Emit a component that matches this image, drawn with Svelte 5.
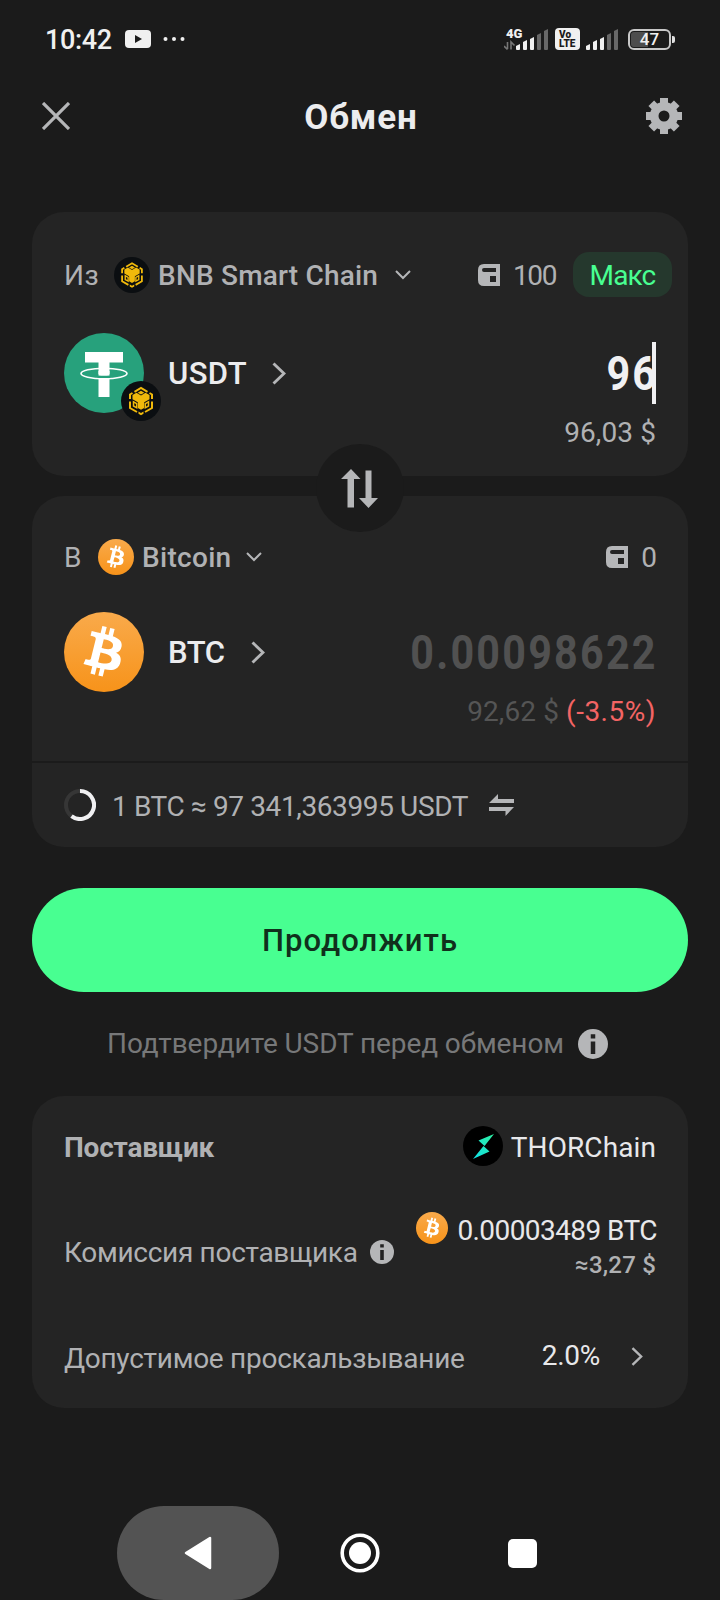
<script>
    const signalBars = [6, 10, 13, 17, 21];

    const from = {
        chain: "BNB Smart Chain",
        token: "USDT",
        balance: "100",
        amount: "96",
        fiat: "96,03 $",
    };
    const to = {
        chain: "Bitcoin",
        token: "BTC",
        balance: "0",
        amount: "0.00098622",
        fiat: "92,62 $",
        change: "(-3.5%)",
    };
</script>

{#snippet bars()}
    {#each signalBars as h, i}
        <path
            d="M{i * 7} {23 - h + 2}l4-2v{h - 1}q0 1-1 1h-2q-1 0-1-1z"
            fill={i < 3 ? "#f0f0f0" : "#686868"}
        />
    {/each}
{/snippet}

{#snippet bnb(size)}
    <svg width={size} height={size} viewBox="0 0 40 40">
        <circle cx="20" cy="20" r="20" fill="#0b0e11" />
        <g fill="none" stroke="#f0b90b" stroke-width="2">
            <path d="M13.500 10.800 20 7l6.500 3.800M11.500 12 9 13.500V18M28.500 12l2.500 1.500V18M9 20.500V27l7 4M31 20.500V27l-7 4" />
            <path d="M12.500 20.800v4.200l3.200 1.800v-4.200zM27.500 20.800v4.200l-3.200 1.800v-4.200z" stroke-width="1.500" />
        </g>
        <path
            fill="#f0b90b"
            d="M20 9.800l3.300 1.900-3.300 1.900-3.300-1.900zM11.500 14l4-2.200 4.500 2.700 4.500-2.700 4 2.200v4.200l-5.300 3.100v5.700L20 28.800 16.800 27v-5.700l-5.300-3.100zM17.500 30.500l2.500 1.400 2.500-1.400v2.300L20 34.200l-2.500-1.400z"
        />
    </svg>
{/snippet}

{#snippet btc(size)}
    <svg width={size} height={size} viewBox="0 0 64 64">
        <defs>
            <linearGradient id="btc-{size}" x1="0" y1="0" x2="0" y2="1">
                <stop offset="0" stop-color="#f9aa4b" />
                <stop offset="1" stop-color="#f7931a" />
            </linearGradient>
        </defs>
        <circle cx="32" cy="32" r="32" fill="url(#btc-{size})" />
        <path
            fill="#fff"
            d="m46.103,27.444c0.637-4.258-2.605-6.547-7.038-8.074l1.438-5.768-3.511-0.875-1.400,5.616c-0.923-0.230-1.871-0.447-2.813-0.662l1.410-5.653-3.509-0.875-1.439,5.766c-0.764-0.174-1.514-0.346-2.242-0.527l0.004-0.018-4.842-1.209-0.934,3.750s2.605,0.597,2.550,0.634c1.422,0.355,1.679,1.296,1.636,2.042l-1.638,6.571c0.098,0.025,0.225,0.061,0.365,0.117-0.117-0.029-0.242-0.061-0.371-0.092l-2.296,9.205c-0.174,0.432-0.615,1.080-1.609,0.834,0.035,0.051-2.552-0.637-2.552-0.637l-1.743,4.019,4.569,1.139c0.850,0.213,1.683,0.436,2.503,0.646l-1.453,5.834,3.507,0.875,1.439-5.772c0.958,0.260,1.888,0.500,2.798,0.726l-1.434,5.745,3.511,0.875,1.453-5.823c5.987,1.133,10.489,0.676,12.384-4.739,1.527-4.360-0.076-6.875-3.226-8.515,2.294-0.529,4.022-2.038,4.483-5.155zm-8.022,11.249c-1.085,4.360-8.426,2.003-10.806,1.412l1.928-7.729c2.380,0.594,10.012,1.770,8.878,6.317zm1.086-11.312c-0.990,3.966-7.100,1.951-9.082,1.457l1.748-7.010c1.982,0.494,8.365,1.416,7.334,5.553z"
        />
    </svg>
{/snippet}

{#snippet wallet()}
    <svg class="wallet" width="22" height="22" viewBox="0 0 22 22">
        <path
            fill="#b5b6b8"
            fill-rule="evenodd"
            d="M6 0h16v22H6q-6 0-6-6V6q0-6 6-6zM6 4a2 2 0 0 0 0 4h12V4zM12 12v6h6v-6z"
        />
    </svg>
{/snippet}

{#snippet down()}
    <svg class="down" width="16" height="10" viewBox="0 0 16 10">
        <path d="M1 1l7 7 7-7" fill="none" stroke="#b5b6b8" stroke-width="2" />
    </svg>
{/snippet}

{#snippet right(w, h)}
    <svg width={w} height={h} viewBox="0 0 14 23">
        <path d="M1.500 1.500l10.500 10-10.500 10" fill="none" stroke="#b5b6b8" stroke-width="2.900" />
    </svg>
{/snippet}

{#snippet info(size)}
    <svg width={size} height={size} viewBox="0 0 24 24">
        <circle cx="12" cy="12" r="12" fill="#b5b6b8" />
        <path d="M10.200 4.200h3.600v3.300h-3.600zM10.200 10h3.600v10h-3.600z" fill="#222" />
    </svg>
{/snippet}

<div class="screen">
    <div class="status">
        <span class="time">10:42</span>
        <svg width="26" height="18" viewBox="0 0 26 18">
            <rect width="26" height="18" rx="4" fill="#f0f0f0" />
            <path d="M10 5v8l7-4z" fill="#1b1b1b" />
        </svg>
        <svg class="dots" width="22" height="6" viewBox="0 0 22 6" fill="#f0f0f0">
            <circle cx="2.500" cy="3" r="2" />
            <circle cx="11" cy="3" r="2" />
            <circle cx="19.500" cy="3" r="2" />
        </svg>
        <svg class="mobile" width="46" height="24" viewBox="0 0 46 24">
            <text x="2" y="10.500" class="net">4G</text>
            <path d="M3.500 15v7M0 19l3.500 3.500M7 22.500V15l3.500 3.500" stroke="#777" stroke-width="1.600" fill="none" />
            <g transform="translate(12 0)">{@render bars()}</g>
        </svg>
        <svg class="volte" width="25" height="22" viewBox="0 0 25 22">
            <rect width="25" height="22" rx="4" fill="#f0f0f0" />
            <text x="4" y="10">Vo</text>
            <text x="4" y="19">LTE</text>
        </svg>
        <svg class="second" width="33" height="24" viewBox="0 0 33 24">{@render bars()}</svg>
        <div class="battery">
            <span>47</span>
        </div>
        <i class="nub"></i>
    </div>

    <header>
        <svg width="28" height="28" viewBox="0 0 28 28">
            <path d="M1 1l26 26M27 1L1 27" stroke="#b5b6b8" stroke-width="3.200" />
        </svg>
        <h1>Обмен</h1>
        <svg width="36" height="36" viewBox="-18 -18 36 36">
            <circle r="9.800" fill="none" stroke="#b5b6b8" stroke-width="8.600" />
            {#each [0, 45, 90, 135, 180, 225, 270, 315] as angle}
                <rect x="-4" y="-18" width="8" height="6" fill="#b5b6b8" transform="rotate({angle})" />
            {/each}
        </svg>
    </header>

    <section class="card from">
        <div class="chain-row">
            <span class="dir iz">Из</span>
            {@render bnb(36)}
            <span class="chain bnb-name">{from.chain}</span>
            {@render down()}
            <div class="balance">
                {@render wallet()}
                <span class="hundred">{from.balance}</span>
                <button class="max">Макс</button>
            </div>
        </div>
        <div class="token-row">
            <div class="token">
                <div class="logo">
                    <svg width="80" height="80" viewBox="0 0 80 80">
                        <circle cx="40" cy="40" r="40" fill="#27a17c" />
                        <path d="M21 19h38v10.500H45.500V41h-11V29.500H21zM34.500 45.500h11V64h-11z" fill="#fff" />
                        <path d="M34.500 38h11v4.500q-5.500.6-11 0z" fill="#fff" />
                        <ellipse cx="40" cy="40.500" rx="23" ry="5.200" fill="none" stroke="#fff" stroke-width="1.600" />
                        <path d="M33.500 44.200q6.500.5 13 0" stroke="#27a17c" stroke-width="1.200" fill="none" />
                    </svg>
                    <div class="badge">{@render bnb(40)}</div>
                </div>
                <span class="symbol usdt">{from.token}</span>
                {@render right(14, 23)}
            </div>
            <div class="value">
                <div class="amount entered"><span>{from.amount}</span><i class="cursor"></i></div>
                <div class="fiat">{from.fiat}</div>
            </div>
        </div>
        <div class="swap">
            <svg width="38" height="39" viewBox="0 0 38 39" fill="#b5b6b8">
                <path d="M10 0l9.500 10H13v28.500H6.500V10H0z" />
                <path d="M27.500 39L18 29h6.500V1.500h6V29H37z" />
            </svg>
        </div>
    </section>

    <section class="card to">
        <div class="chain-row">
            <span class="dir">В</span>
            {@render btc(36)}
            <span class="chain btc-name">{to.chain}</span>
            {@render down()}
            <div class="balance">
                {@render wallet()}
                <span class="zero">{to.balance}</span>
            </div>
        </div>
        <div class="token-row">
            <div class="token">
                {@render btc(80)}
                <span class="symbol btc">{to.token}</span>
                {@render right(14, 23)}
            </div>
            <div class="value">
                <div class="amount estimate"><span>{to.amount}</span></div>
                <div class="fiat"><span class="dim">{to.fiat}</span> <span class="loss">{to.change}</span></div>
            </div>
        </div>
        <div class="rate">
            <svg width="32" height="32" viewBox="0 0 32 32" fill="none" stroke-width="4">
                <circle cx="16" cy="16" r="14" stroke="#363636" />
                <path d="M16 2a14 14 0 1 1-8.500 25.100" stroke="#f0f0f2" />
            </svg>
            <span>1 BTC ≈ 97 341,363995 USDT</span>
            <svg width="25" height="22" viewBox="0 0 25 22" fill="#b5b6b8">
                <path d="M0 9l9-9v5h16v4zM25 13l-8.500 9v-5H0v-4z" />
            </svg>
        </div>
    </section>

    <button class="continue">Продолжить</button>

    <div class="hint">
        <span>Подтвердите USDT перед обменом</span>
        {@render info(30)}
    </div>

    <section class="card details">
        <div class="detail provider">
            <b>Поставщик</b>
            <div class="detail-value">
                <svg width="40" height="40" viewBox="0 0 40 40">
                    <defs>
                        <linearGradient id="thor" x1="0" y1="1" x2="1" y2="0">
                            <stop offset="0" stop-color="#0fe0e8" />
                            <stop offset="1" stop-color="#2ff0a0" />
                        </linearGradient>
                    </defs>
                    <circle cx="20" cy="20" r="20" fill="#000" />
                    <path d="M31 8L15.500 14.500l6 5.500zM20.500 20l6 5.500L10 33z" fill="url(#thor)" />
                </svg>
                <span class="thor">THORChain</span>
            </div>
        </div>
        <div class="detail fee">
            <span class="label">Комиссия поставщика</span>
            {@render info(24)}
            <div class="detail-value">
                {@render btc(32)}
                <div class="fee-value">
                    <span class="fee-amount">0.00003489 BTC</span>
                    <small>≈3,27 $</small>
                </div>
            </div>
        </div>
        <div class="detail slippage">
            <span class="label">Допустимое проскальзывание</span>
            <div class="detail-value">
                <span class="percent">2.0%</span>
                {@render right(12, 19)}
            </div>
        </div>
    </section>

    <nav>
        <div class="nav-item back">
            <svg width="28" height="34" viewBox="0 0 28 34">
                <path d="M26 2v30L2 17z" fill="#fff" stroke="#fff" stroke-width="2.500" stroke-linejoin="round" />
            </svg>
        </div>
        <div class="nav-item">
            <svg width="40" height="40" viewBox="0 0 40 40">
                <circle cx="20" cy="20" r="17.800" fill="none" stroke="#fff" stroke-width="3.600" />
                <circle cx="20" cy="20" r="11" fill="#fff" />
            </svg>
        </div>
        <div class="nav-item"><i class="recent"></i></div>
    </nav>
</div>

<style>
    :global(body) {
        background: #1b1b1b;
    }
    .screen {
        display: flex;
        flex-direction: column;
        width: 720px;
        height: 1600px;
        overflow: hidden;
        background: #1b1b1b;
        color: #b0b1b3;
        font-family: "Roboto", sans-serif;
        font-size: 28px;
        line-height: 40px;
        white-space: nowrap;
    }
    svg {
        display: block;
        flex: none;
    }
    button {
        border: none;
        font: inherit;
        cursor: pointer;
    }
    .status {
        display: flex;
        align-items: center;
        height: 78px;
        padding: 0 45px;
    }
    .time {
        width: 80px;
        padding-top: 1px;
        font-size: 27px;
        font-weight: 500;
        letter-spacing: -0.35px;
        color: #f0f0f0;
    }
    .dots {
        margin-left: 12px;
    }
    .mobile {
        margin-left: auto;
    }
    .net {
        font-size: 13px;
        font-weight: 900;
        fill: #f0f0f0;
    }
    .volte {
        margin-left: 5px;
        font-size: 10px;
        font-weight: 900;
        fill: #1b1b1b;
    }
    .second {
        margin-left: 6px;
    }
    .battery {
        display: flex;
        justify-content: center;
        align-items: center;
        box-sizing: border-box;
        width: 43px;
        height: 21px;
        margin-left: 9px;
        border: 2px solid #c8c8c8;
        border-radius: 6px;
        background: linear-gradient(90deg, #4d4d4d 47%, transparent 47%) content-box;
        padding: 1px;
        color: #f0f0f0;
        font-size: 17px;
        font-weight: 500;
    }
    .nub {
        width: 3px;
        height: 7px;
        margin: 0 0 0 1px;
        border-radius: 0 2px 2px 0;
        background: #e0e0e0;
    }
    header {
        display: flex;
        align-items: center;
        justify-content: space-between;
        height: 76px;
        padding: 0 38px 0 42px;
        margin-bottom: 58px;
    }
    h1 {
        margin: 4px 0 0 6px;
        font-size: 35px;
        letter-spacing: 0.9px;
        color: #ececee;
    }
    .card {
        position: relative;
        box-sizing: border-box;
        margin: 0 32px;
        border-radius: 32px;
        background: #242424;
    }
    .from {
        height: 264px;
        padding: 40px 16px 0 32px;
    }
    .to {
        height: 351px;
        margin-top: 20px;
        padding-top: 40px;
    }
    .to .chain-row,
    .to .token-row {
        margin-left: 32px;
    }
    .chain-row {
        display: flex;
        align-items: center;
        height: 45px;
    }
    .chain-row span,
    .symbol {
        padding-top: 2px;
    }
    .to .chain-row {
        height: 42px;
        padding-right: 32px;
    }
    .dir {
        width: 34px;
    }
    .iz {
        width: 50px;
        letter-spacing: 0.5px;
    }
    .chain {
        margin: 0 17px 0 8px;
        font-weight: 500;
    }
    .bnb-name {
        letter-spacing: 0.2px;
    }
    .btc-name {
        margin: 0 15px 0 8px;
        letter-spacing: 0.3px;
    }
    .balance {
        display: flex;
        align-items: center;
        margin-left: auto;
    }
    .wallet {
        margin-right: 13px;
    }
    .hundred {
        margin-right: 17px;
        letter-spacing: -1.4px;
    }
    .zero {
        margin-right: -1px;
    }
    .max {
        width: 99px;
        height: 45px;
        padding: 2px 0 0;
        border-radius: 16px;
        background: #25382d;
        color: #48ff91;
        letter-spacing: -0.85px;
    }
    .token-row {
        display: flex;
        justify-content: space-between;
        margin-top: 36px;
        padding-right: 16px;
    }
    .to .token-row {
        margin-top: 34px;
        padding-right: 32px;
    }
    .token {
        display: flex;
        align-items: center;
        height: 80px;
    }
    .logo {
        position: relative;
    }
    .badge {
        position: absolute;
        left: 57px;
        top: 48px;
    }
    .symbol {
        margin: 0 25px 0 24px;
        font-size: 31px;
        font-weight: 500;
        color: #ececee;
    }
    .usdt {
        letter-spacing: 0.4px;
    }
    .btc {
        margin-right: 27px;
        letter-spacing: -0.5px;
    }
    .value {
        padding-top: 9px;
        text-align: right;
    }
    .amount {
        position: relative;
        height: 62px;
        margin-bottom: 9px;
        font-size: 48px;
        font-weight: 700;
        line-height: 64px;
    }
    /* narrow, widely spaced digits */
    .amount span {
        display: inline-block;
        margin-right: -2px;
        letter-spacing: 2.6px;
        transform: scaleX(0.86);
        transform-origin: right;
    }
    .entered {
        color: #f0f0f2;
    }
    .estimate {
        color: #515151;
    }
    .cursor {
        position: absolute;
        right: 0;
        top: 0;
        width: 4px;
        height: 62px;
        background: #f0f0f2;
    }
    .fiat {
        letter-spacing: 0.1px;
    }
    .dim {
        color: #555;
    }
    .loss {
        letter-spacing: 0.5px;
        color: #f36464;
    }
    .swap {
        position: absolute;
        left: 284px;
        top: 232px;
        z-index: 1;
        display: flex;
        align-items: center;
        justify-content: center;
        width: 88px;
        height: 88px;
        border-radius: 50%;
        background: #1b1b1b;
    }
    .rate {
        display: flex;
        align-items: center;
        height: 84px;
        margin-top: 29px;
        padding-left: 32px;
        border-top: 2px solid #1b1b1b;
    }
    .rate span {
        margin: 3px 21px 0 16px;
        letter-spacing: -0.38px;
    }
    .continue {
        flex: none;
        height: 104px;
        margin: 41px 32px 0;
        padding-top: 3px;
        border-radius: 52px;
        background: #48ff91;
        color: #10301c;
        font-size: 31px;
        font-weight: 500;
        letter-spacing: 1.05px;
    }
    .hint {
        display: flex;
        align-items: center;
        height: 104px;
        padding-left: 107px;
        color: #777879;
    }
    .hint span {
        margin-right: 14px;
        letter-spacing: -0.09px;
    }
    .details {
        height: 312px;
        padding: 0 32px;
    }
    .detail {
        display: flex;
        align-items: center;
        height: 100px;
    }
    .detail-value {
        display: flex;
        align-items: center;
        margin-left: auto;
        color: #e8e8ea;
    }
    .provider b {
        padding-top: 3px;
        letter-spacing: -0.2px;
    }
    .thor {
        margin: 0 0 0 8px;
        padding-top: 3px;
        letter-spacing: 0.1px;
    }
    .fee {
        height: 112px;
    }
    .fee .label {
        margin-right: 12px;
        padding-top: 2px;
        letter-spacing: -0.3px;
    }
    .fee .detail-value {
        align-items: flex-start;
        margin-top: -12px;
        margin-right: -1px;
    }
    .fee-value {
        display: flex;
        flex-direction: column;
        align-items: flex-end;
        margin: 0 0 0 9px;
        line-height: 38px;
    }
    .fee-amount {
        letter-spacing: -0.57px;
    }
    small {
        margin-right: 1px;
        font-size: 24px;
        font-weight: 500;
        line-height: 31px;
        letter-spacing: 0.2px;
        color: #b0b1b3;
    }
    .slippage {
        height: 100px;
    }
    .slippage .label {
        margin-top: 1px;
        letter-spacing: -0.27px;
    }
    .percent {
        margin-right: 31px;
        letter-spacing: -0.29px;
    }
    .slippage .detail-value {
        margin: -4px 13px 0 auto;
    }
    nav {
        display: flex;
        height: 94px;
        margin-top: auto;
        padding-left: 117px;
    }
    .nav-item {
        display: flex;
        align-items: center;
        justify-content: center;
        width: 162px;
        height: 94px;
    }
    .back {
        border-radius: 47px;
        background: #535353;
    }
    .recent {
        width: 29px;
        height: 29px;
        border-radius: 5px;
        background: #fff;
    }
</style>
